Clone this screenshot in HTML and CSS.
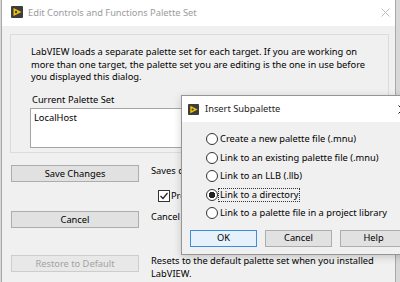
FILE: index.html
```html
<!DOCTYPE html>
<html>
<head>
<meta charset="utf-8">
<title>Edit Controls and Functions Palette Set</title>
<link rel="stylesheet" href="styles.css">
</head>
<body>
<div class="window">
  <div class="titlebar">
    <svg class="appicon" width="12" height="12" viewBox="0 0 12 12">
      <rect width="12" height="12" rx="1" fill="#3d3d3d"/>
      <path d="M2.5 2 L10.5 6 L2.5 10 Z" fill="#f3c300"/>
      <circle cx="5" cy="6" r="1.2" fill="#3d3d3d"/>
    </svg>
    <span class="title">Edit Controls and Functions Palette Set</span>
    <svg class="close" width="9" height="9" viewBox="0 0 9 9">
      <path d="M0.5 0.5 L8.5 8.5 M8.5 0.5 L0.5 8.5" stroke="#bdbdbd" stroke-width="1"/>
    </svg>
  </div>
  <div class="content">
    <div class="group">
      <p class="intro">LabVIEW loads a separate palette set for each target. If you are working on more than one target, the palette set you are editing is the one in use before you displayed this dialog.</p>
      <div class="label">Current Palette Set</div>
      <div class="listbox">
        <div class="item">LocalHost</div>
      </div>
    </div>
    <div class="actions">
      <div class="row">
        <button class="btn">Save Changes</button>
        <span class="desc covered">Saves changes to the palette set.</span>
      </div>
      <div class="row check-row">
        <span class="checkbox">
          <svg width="10" height="10" viewBox="0 0 10 10"><path d="M1.5 5 L4 7.5 L8.5 2" fill="none" stroke="#222" stroke-width="1.2"/></svg>
        </span>
        <span class="check-label covered">Prompt to save changes</span>
      </div>
      <div class="row cancel-row">
        <button class="btn">Cancel</button>
        <span class="desc covered">Cancel changes and close the dialog box.</span>
      </div>
      <div class="row restore-row">
        <button class="btn btn-disabled">Restore to Default</button>
        <span class="desc">Resets to the default palette set when you installed LabVIEW.</span>
      </div>
    </div>
  </div>
</div>

<div class="dialog">
  <div class="dlg-titlebar">
    <svg class="dlg-icon" width="11" height="11" viewBox="0 0 12 12">
      <rect width="12" height="12" rx="1" fill="#3d3d3d"/>
      <path d="M2.5 2 L10.5 6 L2.5 10 Z" fill="#f3c300"/>
      <circle cx="5" cy="6" r="1.2" fill="#3d3d3d"/>
    </svg>
    <span class="dlg-title">Insert Subpalette</span>
    <svg class="dlg-close" width="9" height="9" viewBox="0 0 9 9">
      <path d="M0.5 0.5 L8.5 8.5 M8.5 0.5 L0.5 8.5" stroke="#111" stroke-width="1"/>
    </svg>
  </div>
  <div class="dlg-body">
    <div class="radio-row"><span class="radio"></span><span class="opt">Create a new palette file (.mnu)</span></div>
    <div class="radio-row"><span class="radio"></span><span class="opt">Link to an existing palette file (.mnu)</span></div>
    <div class="radio-row"><span class="radio"></span><span class="opt">Link to an LLB (.llb)</span></div>
    <div class="radio-row"><span class="radio checked"></span><span class="opt focused">Link to a directory</span></div>
    <div class="radio-row"><span class="radio"></span><span class="opt">Link to a palette file in a project library</span></div>
    <div class="dlg-buttons">
      <button class="btn dlg-btn default">OK</button>
      <button class="btn dlg-btn">Cancel</button>
      <button class="btn dlg-btn">Help</button>
    </div>
  </div>
</div>
</body>
</html>
```

FILE: styles.css
```css
body {
  margin: 0;
  width: 400px;
  height: 282px;
  overflow: hidden;
  position: relative;
  background: #d8d8d8;
  font-family: "Noto Sans", sans-serif;
  font-size: 9.3px;
  line-height: 12.5px;
  color: #000;
}
.window {
  margin-left: 1px;
  width: 395px;
  height: 282px;
  box-sizing: border-box;
  border-left: 1px solid #a8a8a8;
  border-right: 1px solid #a8a8a8;
  background: #f0f0f0;
  overflow: hidden;
}
.titlebar {
  height: 26px;
  background: #fff;
  display: flex;
  align-items: center;
  padding-left: 9px;
}
.appicon {
  margin-bottom: 3px;
}
.title {
  flex: 1;
  margin-left: 5px;
  color: #9c9c9c;
}
.close {
  margin-right: 5px;
  margin-bottom: 2px;
}
.content {
  padding: 8px 6px 0 8px;
}
.group {
  height: 119px;
  box-sizing: border-box;
  border: 1px solid #dcdcdc;
  padding: 11px 14px 0 20px;
}
.intro {
  margin: 0;
}
.label {
  margin-top: 10px;
  padding-left: 1px;
}
.listbox {
  margin: 2px 0 0 -1px;
  height: 40px;
  box-sizing: border-box;
  border: 1px solid #a5a5a5;
  background: #fff;
  padding: 3px;
}
.actions {
  margin-top: 12px;
  padding-left: 1px;
}
.row {
  display: flex;
  align-items: flex-start;
}
.btn {
  width: 128px;
  height: 17px;
  box-sizing: border-box;
  border: 1px solid #adadad;
  background: #e1e1e1;
  font: inherit;
  line-height: 14px;
  color: #000;
  padding: 0;
  flex-shrink: 0;
}
.btn-disabled {
  color: #a3a3a3;
  background: #e8e8e8;
  border-color: #cdcdcd;
}
.desc {
  margin-left: 12px;
  width: 232px;
}
/* texts that run under the dialog are cut at its left edge */
.covered {
  width: 30px;
  overflow: hidden;
  white-space: nowrap;
}
.check-row {
  margin-top: 8px;
  height: 12px;
  padding-left: 147px;
}
.checkbox {
  width: 12px;
  height: 12px;
  box-sizing: border-box;
  border: 1px solid #333;
  background: #fff;
  display: flex;
  align-items: center;
  justify-content: center;
}
.check-label {
  margin-left: 1px;
  margin-top: -0.5px;
  width: 11px;
}
.cancel-row {
  margin-top: 9px;
}
.restore-row {
  margin-top: 27px;
}

/* Insert Subpalette dialog, lying over the main window */
.dialog {
  position: absolute;
  left: 181px;
  top: 95px;
  width: 232px;
  height: 160px;
  box-sizing: border-box;
  border: 1px solid #959595;
  background: #f0f0f0;
  box-shadow: 0 2px 8px rgba(0, 0, 0, 0.18);
}
.dlg-titlebar {
  height: 26px;
  background: #fff;
  display: flex;
  align-items: center;
  padding-left: 6px;
}
.dlg-title {
  flex: 1;
  margin-left: 6px;
  color: #1e1e1e;
}
.dlg-close {
  margin-right: 5px;
}
.dlg-body {
  padding-top: 8px;
}
.radio-row {
  display: flex;
  align-items: center;
  height: 18.5px;
  padding-left: 24px;
  white-space: nowrap;
}
.radio {
  width: 12px;
  height: 12px;
  box-sizing: border-box;
  border: 1px solid #333;
  border-radius: 50%;
  background: #fff;
  flex-shrink: 0;
}
.radio.checked {
  background: radial-gradient(circle, #222 0, #222 3px, #fff 3.5px);
}
.opt {
  padding: 0 1px;
  border: 1px dotted transparent;
}
.opt.focused {
  border-color: #333;
}
.dlg-buttons {
  display: flex;
  gap: 8px;
  margin-top: 7px;
  padding-left: 8px;
}
.dlg-btn {
  width: 67px;
}
.default {
  background: #e5f1fb;
  border-color: #3d8fdb;
}
```
